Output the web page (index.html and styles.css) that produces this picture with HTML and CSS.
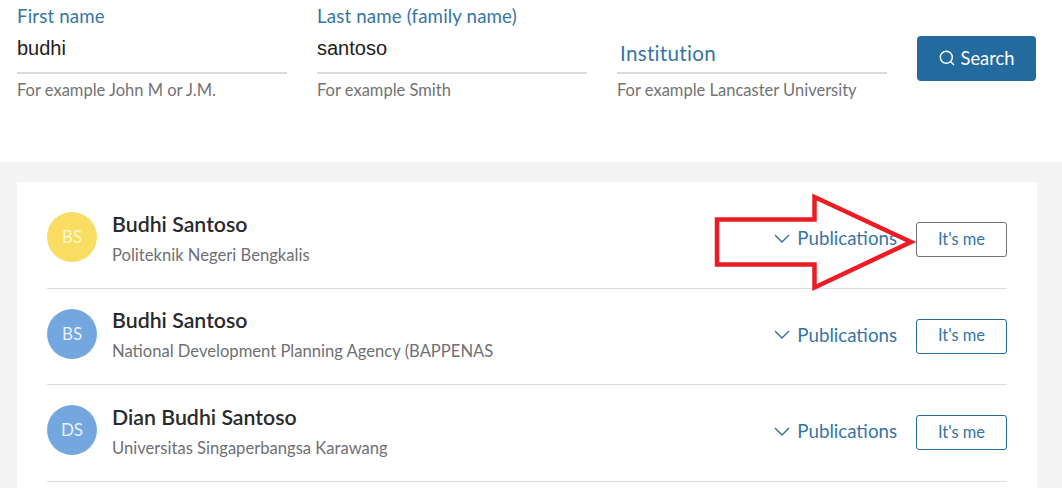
FILE: index.html
```html
<!DOCTYPE html>
<html lang="en">
<head>
    <meta charset="UTF-8">
    <title>Author search</title>
    <link rel="stylesheet" href="styles.css">
</head>
<body>
    <form class="search">
        <div class="field">
            <label class="field-label">First name</label>
            <div class="field-value">budhi</div>
            <p class="field-hint">For example John M or J.M.</p>
        </div>
        <div class="field">
            <label class="field-label">Last name (family name)</label>
            <div class="field-value">santoso</div>
            <p class="field-hint">For example Smith</p>
        </div>
        <div class="field field-empty">
            <label class="field-label">Institution</label>
            <div class="field-value"></div>
            <p class="field-hint">For example Lancaster University</p>
        </div>
        <button type="button" class="search-btn">
            <svg width="16" height="16" viewBox="0 0 16 16" fill="none" stroke="#fff" stroke-width="1.4">
                <circle cx="7.3" cy="7.3" r="6"/>
                <path d="M11.6 11.6l3.4 3.4"/>
            </svg>
            Search
        </button>
    </form>

    <main class="results">
        <ul class="card">
            <li class="row">
                <span class="avatar avatar-yellow">BS</span>
                <div class="person">
                    <h2>Budhi Santoso</h2>
                    <p>Politeknik Negeri Bengkalis</p>
                </div>
                <a class="pubs">
                    <svg width="16" height="9" viewBox="0 0 16 9" fill="none" stroke="#2d6c9c" stroke-width="1.4"><path d="M1 1l7 7 7-7"/></svg>
                    Publications
                </a>
                <button type="button" class="me me-hover">It's me</button>
            </li>
            <li class="row">
                <span class="avatar">BS</span>
                <div class="person">
                    <h2>Budhi Santoso</h2>
                    <p>National Development Planning Agency (BAPPENAS</p>
                </div>
                <a class="pubs">
                    <svg width="16" height="9" viewBox="0 0 16 9" fill="none" stroke="#2d6c9c" stroke-width="1.4"><path d="M1 1l7 7 7-7"/></svg>
                    Publications
                </a>
                <button type="button" class="me">It's me</button>
            </li>
            <li class="row">
                <span class="avatar">DS</span>
                <div class="person">
                    <h2>Dian Budhi Santoso</h2>
                    <p>Universitas Singaperbangsa Karawang</p>
                </div>
                <a class="pubs">
                    <svg width="16" height="9" viewBox="0 0 16 9" fill="none" stroke="#2d6c9c" stroke-width="1.4"><path d="M1 1l7 7 7-7"/></svg>
                    Publications
                </a>
                <button type="button" class="me">It's me</button>
            </li>
        </ul>
    </main>

    <!-- arrow drawn over the page -->
    <svg class="arrow" width="210" height="104" viewBox="0 0 210 104" fill="none" stroke="#ed1c24" stroke-width="4.5">
        <path d="M3 26.500H100.500V4L197 49 100.500 94.500V71.500H3z"/>
    </svg>
</body>
</html>
```

FILE: styles.css
```css
* {
    box-sizing: border-box;
}
html, body {
    margin: 0;
    padding: 0;
}
body {
    position: relative;
    height: 488px;
    overflow: hidden;
    background-color: #fff;
    font-family: Lato, "Open Sans", sans-serif;
}
.search {
    display: flex;
    align-items: flex-start;
    height: 162px;
    padding-left: 17px;
}
.field {
    width: 270px;
    margin-right: 30px;
}
.field-label {
    display: block;
    height: 21px;
    margin-top: 6px;
    font-size: 18.700px;
    letter-spacing: 0.15px;
    line-height: 21px;
    color: #3775a3;
}
.field-value {
    height: 47px;
    padding-top: 9px;
    border-bottom: 2px solid #dcdcdc;
    font-family: "Liberation Sans", Arial, sans-serif;
    font-size: 20px;
    line-height: 24px;
    color: #222;
}
.field-hint {
    margin: 6px 0 0;
    font-size: 16.500px;
    line-height: 20px;
    color: #737373;
}
.field-empty .field-label {
    position: relative;
    top: 37px;
    left: 3px;
    font-size: 20.600px;
    letter-spacing: 0.3px;
}
.search-btn {
    display: flex;
    align-items: center;
    justify-content: center;
    gap: 6px;
    width: 119px;
    height: 45px;
    margin-top: 36px;
    border: none;
    border-radius: 4px;
    background-color: #236b9e;
    font-family: inherit;
    font-size: 18.300px;
    color: #fff;
    padding-bottom: 2px;
}
.results {
    height: 326px;
    padding: 20px 25px 0 17px;
    background-color: #f4f4f4;
}
.card {
    list-style: none;
    margin: 0;
    padding: 10px 30px 0;
    background-color: #fff;
    height: 306px;
}
.row {
    display: flex;
    align-items: center;
    height: 96.600px;
    border-bottom: 1px solid #dcdcdc;
}
.avatar {
    flex: none;
    width: 50px;
    height: 50px;
    margin-bottom: 5px;
    border-radius: 50%;
    background-color: #74a7df;
    font-size: 17px;
    line-height: 50px;
    text-align: center;
    color: #e8f1fb;
}
.avatar-yellow {
    background-color: #f9dd63;
    color: #fff6cf;
}
.person {
    flex: 1;
    margin-left: 15px;
    margin-bottom: 3px;
}
.person h2 {
    margin: 0;
    font-size: 21.300px;
    line-height: 24px;
    font-weight: 600;
    color: #2a2a2a;
}
.person p {
    margin: 9px 0 0;
    font-size: 16.600px;
    line-height: 20px;
    color: #6f6f75;
}
.pubs {
    display: flex;
    align-items: center;
    gap: 7px;
    margin-right: 19px;
    margin-bottom: 3px;
    font-size: 18.700px;
    color: #3775a3;
}
.me {
    width: 91px;
    height: 35px;
    border: 1px solid #236b9e;
    border-radius: 3px;
    background-color: #fff;
    font-family: inherit;
    font-size: 16.500px;
    color: #3775a3;
    padding-bottom: 3px;
}
.me-hover {
    border-color: #737373;
}
.arrow {
    position: absolute;
    left: 714px;
    top: 193px;
}
```
